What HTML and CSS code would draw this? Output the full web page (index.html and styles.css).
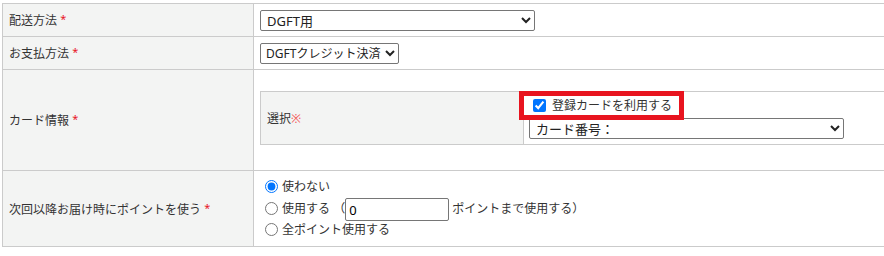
FILE: index.html
```html
<!DOCTYPE html>
<html lang="ja">
<head>
    <meta charset="UTF-8">
    <meta name="viewport" content="width=device-width, initial-scale=1.0">
    <title>ご注文内容</title>
    <link rel="stylesheet" href="styles.css">
</head>
<body>

<div class="page">
    <table class="order-table">
        <tr class="row-short">
            <th>配送方法 <span class="req">*</span></th>
            <td>
                <select class="sel-delivery">
                    <option>DGFT用</option>
                </select>
            </td>
        </tr>
        <tr class="row-short">
            <th>お支払方法 <span class="req">*</span></th>
            <td>
                <select class="sel-payment">
                    <option>DGFTクレジット決済</option>
                </select>
            </td>
        </tr>
        <tr class="row-card">
            <th>カード情報 <span class="req">*</span></th>
            <td class="card-cell">
                <table class="card-table">
                    <tr>
                        <th>選択<span class="note">※</span></th>
                        <td>
                            <div class="card-line">
                                <label class="marked"><input type="checkbox" checked> 登録カードを利用する</label>
                            </div>
                            <select class="sel-card">
                                <option>カード番号：</option>
                            </select>
                        </td>
                    </tr>
                </table>
            </td>
        </tr>
        <tr class="row-point">
            <th>次回以降お届け時にポイントを使う <span class="req">*</span></th>
            <td class="point-cell">
                <div class="point-line">
                    <label><input type="radio" name="point" checked>使わない</label>
                </div>
                <div class="point-line">
                    <label><input type="radio" name="point">使用する</label>
                    <span class="paren">（<input type="text" class="point-input" value="0">ポイントまで使用する）</span>
                </div>
                <div class="point-line">
                    <label><input type="radio" name="point">全ポイント使用する</label>
                </div>
            </td>
        </tr>
    </table>
</div>

</body>
</html>
```

FILE: styles.css
```css
html, body {
    margin: 0;
    overflow: hidden;
    background-color: #fff;
}
body {
    font-family: "Noto Sans", "Noto Sans CJK JP", sans-serif;
    font-size: 12px;
    color: #333;
}
.page {
    padding: 3px 0 0 2px;
    width: 1000px;
}
.order-table {
    width: 1000px;
    border-collapse: collapse;
}
.order-table > tbody > tr > th,
.order-table > tbody > tr > td {
    border: 1px solid #cbcbcb;
    padding: 0 6px;
    vertical-align: middle;
    text-align: left;
}
.order-table > tbody > tr > th {
    width: 238px;
    font-weight: normal;
    background-color: #f3f4f3;
}
.row-short {
    height: 33px;
}
.row-card {
    height: 101px;
}
.row-point {
    height: 76px;
}
.req {
    color: #e8141f;
    font-size: 11px;
    position: relative;
    top: -2px;
}
.note {
    color: #f25a5a;
}
select {
    height: 21px;
    font-family: "Noto Sans", "Noto Sans CJK JP", sans-serif;
    font-size: 13px;
    color: #222;
    border: 1px solid #767676;
    border-radius: 2px;
    background-color: #fff;
    padding: 0 2px;
}
.sel-delivery {
    width: 275px;
}
.sel-payment {
    font-size: 12px;
    padding: 0 1px;
}
.sel-card {
    width: 315px;
    display: block;
}
.order-table > tbody > tr > td.card-cell {
    padding: 0 6px 5px 6px;
}
.card-table {
    width: 100%;
    border-collapse: collapse;
}
.card-table th, .card-table td {
    border: 1px solid #cbcbcb;
    text-align: left;
    vertical-align: middle;
}
.card-table th {
    width: 250px;
    padding: 4px 6px;
    font-weight: normal;
    background-color: #f3f4f3;
}
.card-table td {
    padding: 4px 5px 5px 5px;
}
.card-line {
    height: 22px;
    line-height: 20px;
}
.marked {
    position: relative;
}
.marked::after {
    content: "";
    position: absolute;
    left: -10px;
    top: -6px;
    right: -12px;
    bottom: -6px;
    border: 5px solid #e8141f;
}
.marked input {
    margin: 3px 3px 3px 4px;
    vertical-align: -2px;
}
.point-line {
    line-height: 20px;
}
.point-line:nth-child(2) {
    height: 23px;
    line-height: 23px;
}
.point-line input[type="radio"] {
    margin: 3px 4px 0 5px;
    vertical-align: -2px;
}
.paren {
    margin-left: 0;
}
.point-input {
    width: 104px;
    height: 23px;
    box-sizing: border-box;
    border: 1px solid #767676;
    border-radius: 2px;
    padding: 0 3px;
    font-family: "Noto Sans", sans-serif;
    font-size: 13px;
    vertical-align: middle;
    margin: 0 3px 0 0;
}
```
